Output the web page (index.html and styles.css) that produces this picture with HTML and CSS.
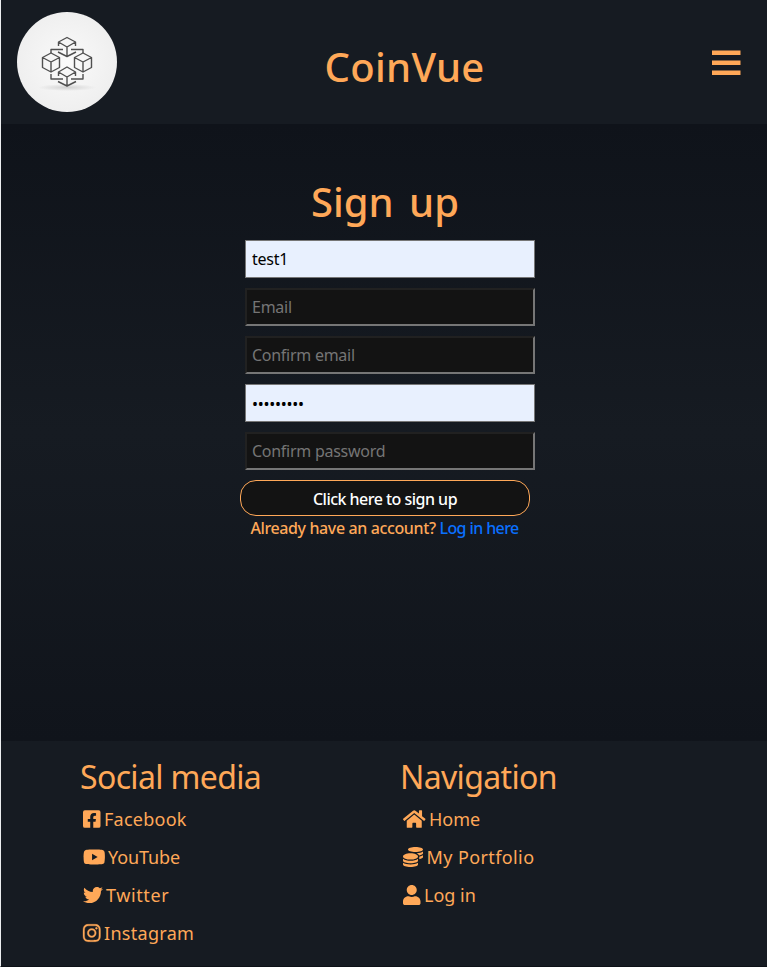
FILE: index.html
```html
<!DOCTYPE html>
<html lang="en">
<head>
<meta charset="utf-8">
<title>CoinVue</title>
<link rel="stylesheet" href="styles.css">
</head>
<body>
<header class="header">
  <svg class="logo" viewBox="0 0 100 100">
    <defs>
      <radialGradient id="disc"><stop offset="0" stop-color="#fafafa"/><stop offset="1" stop-color="#efefef"/></radialGradient>
      <radialGradient id="shade"><stop offset="0" stop-color="#d2d2d2"/><stop offset="1" stop-color="#d2d2d2" stop-opacity="0"/></radialGradient>
    </defs>
    <circle cx="50" cy="50" r="50" fill="url(#disc)"/>
    <ellipse cx="50" cy="75.500" rx="29" ry="3.500" fill="url(#shade)"/>
    <g fill="none" stroke="#505050" stroke-width="1.400" stroke-linejoin="round">
      <path d="M41.500 34v-4l8.500-4.500 8.500 4.500v4M41.500 30l8.500 5 8.500-5M50 35v9.500M41 40l9 4.500 9-4.500"/>
      <path d="M25.500 45.500l8.500-4.500 8.500 4.500v10L34 60l-8.500-4.500zM25.500 45.500l8.500 4.500 8.500-4.500M34 50v10"/>
      <path d="M57.500 45.500l8.500-4.500 8.500 4.500v10L66 60l-8.500-4.500zM57.500 45.500l8.500 4.500 8.500-4.500M66 50v10"/>
      <path d="M41.500 64v-4l8.500-5 8.500 5v4M41.500 60l8.500 5 8.500-5M50 65v9M41 69.500l9 4.500 9-4.500"/>
      <path d="M34 41v-3.500h12M54 37.500h12V41M34 62v5h12M54 67h12v-5"/>
    </g>
  </svg>
  <h1 class="title brand">CoinVue</h1>
  <svg class="bars" viewBox="0 0 29 26"><path d="M0 .5h28.500v4.500H0zM0 10.500h28.500v4.500H0zM0 20.500h28.500v4.500H0z"/></svg>
</header>
<main class="main">
  <h2 class="title signup">Sign up</h2>
  <form class="form">
    <input class="field filled" type="text" value="test1">
    <input class="field" type="text" placeholder="Email">
    <input class="field" type="text" placeholder="Confirm email">
    <input class="field filled dots" type="text" value="•••••••••">
    <input class="field" type="text" placeholder="Confirm password">
    <button class="submit" type="button">Click here to sign up</button>
  </form>
  <p class="hint">Already have an account? <a href="#">Log in here</a></p>
</main>
<footer class="footer">
  <section class="column">
    <h3 class="heading">Social media</h3>
    <ul class="links">
      <li><svg class="icon" viewBox="0 0 448 512"><path d="M400 32H48A48 48 0 0 0 0 80v352a48 48 0 0 0 48 48h137.250V327.690h-63V256h63v-54.640c0-62.150 37-96.480 93.670-96.480 27.140 0 55.520 4.840 55.520 4.840v61h-31.270c-30.810 0-40.420 19.120-40.420 38.730V256h68.780l-11 71.690h-57.780V480H400a48 48 0 0 0 48-48V80a48 48 0 0 0-48-48z"/></svg><span class="facebook">Facebook</span></li>
      <li><svg class="icon wide" viewBox="0 0 576 512"><path d="M549.655 124.083c-6.281-23.650-24.787-42.276-48.284-48.597C458.781 64 288 64 288 64S117.220 64 74.629 75.486c-23.497 6.322-42.003 24.947-48.284 48.597-11.412 42.867-11.412 132.305-11.412 132.305s0 89.438 11.412 132.305c6.281 23.650 24.787 41.500 48.284 47.821C117.220 448 288 448 288 448s170.780 0 213.371-11.486c23.497-6.321 42.003-24.171 48.284-47.821 11.412-42.867 11.412-132.305 11.412-132.305s0-89.438-11.412-132.305zm-317.510 213.508V175.185l142.739 81.205-142.739 81.201z"/></svg><span class="youtube">YouTube</span></li>
      <li><svg class="icon full" viewBox="0 0 512 512"><path d="M459.370 151.716c.325 4.548.325 9.097.325 13.645 0 138.720-105.583 298.558-298.558 298.558-59.452 0-114.680-17.219-161.137-47.106 8.447.974 16.568 1.299 25.340 1.299 49.055 0 94.213-16.568 130.274-44.832-46.132-.975-84.792-31.188-98.112-72.772 6.498.974 12.995 1.624 19.818 1.624 9.421 0 18.843-1.300 27.614-3.573-48.081-9.747-84.143-51.980-84.143-102.985v-1.299c13.969 7.797 30.214 12.670 47.431 13.319-28.264-18.843-46.781-51.005-46.781-87.391 0-19.492 5.197-37.360 14.294-52.954 51.655 63.675 129.300 105.258 216.365 109.807-1.624-7.797-2.599-15.918-2.599-24.040 0-57.828 46.782-104.934 104.934-104.934 30.213 0 57.502 12.670 76.670 33.137 23.715-4.548 46.456-13.320 66.599-25.340-7.798 24.366-24.366 44.833-46.132 57.827 21.117-2.273 41.584-8.122 60.426-16.243-14.292 20.791-32.161 39.308-52.628 54.253z"/></svg><span class="twitter">Twitter</span></li>
      <li><svg class="icon insta" viewBox="0 0 448 512"><path d="M224.100 141c-63.600 0-114.900 51.300-114.900 114.900s51.300 114.900 114.900 114.900S339 319.500 339 255.900 287.700 141 224.100 141zm0 189.600c-41.100 0-74.700-33.500-74.700-74.700s33.500-74.700 74.700-74.700 74.700 33.500 74.700 74.700-33.600 74.700-74.700 74.700zm146.400-194.300c0 14.900-12 26.800-26.800 26.800-14.900 0-26.800-12-26.800-26.800s12-26.800 26.800-26.800 26.800 12 26.800 26.800zm76.100 27.200c-1.700-35.900-9.900-67.700-36.200-93.900-26.200-26.200-58-34.400-93.900-36.200-37-2.100-147.900-2.100-184.900 0-35.800 1.700-67.600 9.900-93.900 36.100s-34.400 58-36.200 93.900c-2.100 37-2.100 147.900 0 184.900 1.700 35.900 9.900 67.700 36.200 93.900s58 34.400 93.900 36.200c37 2.100 147.900 2.100 184.900 0 35.900-1.700 67.700-9.900 93.900-36.200 26.200-26.200 34.400-58 36.200-93.900 2.100-37 2.100-147.800 0-184.800zM398.800 388c-7.800 19.600-22.900 34.700-42.600 42.600-29.500 11.700-99.500 9-132.100 9s-102.700 2.600-132.100-9c-19.600-7.800-34.700-22.900-42.600-42.600-11.700-29.500-9-99.500-9-132.100s-2.600-102.700 9-132.100c7.800-19.600 22.900-34.700 42.600-42.600 29.500-11.700 99.500-9 132.100-9s102.700-2.600 132.100 9c19.600 7.800 34.700 22.900 42.600 42.600 11.700 29.500 9 99.500 9 132.100s2.700 102.700-9 132.100z"/></svg><span class="instagram">Instagram</span></li>
    </ul>
  </section>
  <section class="column">
    <h3 class="heading">Navigation</h3>
    <ul class="links">
      <li><svg class="icon wide" viewBox="0 0 576 512"><path d="M280.370 148.260L96 300.110V464a16 16 0 0 0 16 16l112.060-.29a16 16 0 0 0 15.920-16V368a16 16 0 0 1 16-16h64a16 16 0 0 1 16 16v95.640a16 16 0 0 0 16 16.050L464 480a16 16 0 0 0 16-16V300L295.670 148.260a12.190 12.190 0 0 0-15.300 0zM571.600 251.470L488 182.560V44.050a12 12 0 0 0-12-12h-56a12 12 0 0 0-12 12v72.610L318.470 43a48 48 0 0 0-61 0L4.340 251.470a12 12 0 0 0-1.600 16.900l25.500 31A12 12 0 0 0 45.150 301l235.220-193.740a12.190 12.190 0 0 1 15.300 0L530.900 301a12 12 0 0 0 16.900-1.600l25.500-31a12 12 0 0 0-1.700-16.930z"/></svg><span class="home">Home</span></li>
      <li><svg class="icon full" viewBox="0 0 512 512"><path d="M0 405.300V448c0 35.300 86 64 192 64s192-28.700 192-64v-42.700C342.700 434.400 267.200 448 192 448S41.300 434.400 0 405.300zM320 128c106 0 192-28.700 192-64S426 0 320 0 128 28.700 128 64s86 64 192 64zM0 300.400V352c0 35.300 86 64 192 64s192-28.700 192-64v-51.600c-41.300 34-116.900 51.600-192 51.600S41.300 334.400 0 300.400zm416 11c57.300-11.100 96-31.700 96-55.400v-42.700c-23.200 16.400-57.300 27.600-96 34.500v63.600zM192 160C86 160 0 195.800 0 240s86 80 192 80 192-35.800 192-80-86-80-192-80zm219.300 56.300c60-10.800 100.700-32 100.700-56.300v-42.700c-35.500 25.100-96.500 38.600-160.700 41.800 29.500 14.300 51.200 33.500 60 57.200z"/></svg><span class="portfolio">My Portfolio</span></li>
      <li><svg class="icon" viewBox="0 0 448 512"><path d="M224 256c70.700 0 128-57.300 128-128S294.700 0 224 0 96 57.300 96 128s57.300 128 128 128zm89.600 32h-16.700c-22.200 10.200-46.900 16-72.900 16s-50.600-5.800-72.900-16h-16.700C60.200 288 0 348.200 0 422.400V464c0 26.500 21.500 48 48 48h352c26.500 0 48-21.500 48-48v-41.600c0-74.200-60.200-134.400-134.400-134.400z"/></svg><span>Log in</span></li>
    </ul>
  </section>
</footer>
</body>
</html>
```
FILE: styles.css
```css
* { box-sizing: border-box; }
body {
  margin: 0;
  height: 967px;
  display: flex;
  flex-direction: column;
  border-left: 1px solid #eceef0;
  border-bottom: 1px solid #0d1117;
  background: #161b22;
  color: #ffa858;
  font-family: "Noto Sans", "Open Sans", sans-serif;
  overflow: hidden;
}
.header {
  height: 124px;
  flex: none;
  display: flex;
  align-items: center;
  padding: 0 26px 0 16px;
}
.logo { width: 100px; height: 100px; }
.title { margin: 0; font-size: 40px; line-height: 48px; font-weight: 500; white-space: nowrap; }
.brand { padding-top: 9px; margin-left: 207.5px; letter-spacing: 0.3px; }
.signup { word-spacing: 5px; margin-left: 1px; }
.bars { width: 29px; height: 26px; margin: 2px 0 0 auto; fill: #ffa858; }
.main {
  height: 617px;
  flex: none;
  padding: 54px 0 0 1px;
  display: flex;
  flex-direction: column;
  align-items: center;
  background: linear-gradient(#0f131a, #161b22, #10141b);
}
.form { width: 290px; margin: 14px 0 0 1px; display: flex; flex-direction: column; gap: 10px; }
.field {
  width: 290px;
  height: 38px;
  margin-left: 5px;
  padding: 1px 5px;
  border: 2px solid;
  border-color: #212121 #767676 #767676 #212121;
  background: #131313;
  color: #000;
  font: 16px "Noto Sans", "Open Sans", sans-serif;
  letter-spacing: -0.27px;
}
.field::placeholder { color: #757575; }
.filled { border: 1px solid #767676; background: #e8f0fe; padding: 1px 6px; }
.dots { padding-bottom: 0; }
.submit {
  height: 36px;
  padding: 2px 0 0;
  border: 1px solid #ffa858;
  border-radius: 16px;
  background: #131313;
  color: #fff;
  font: 500 16px "Noto Sans", "Open Sans", sans-serif;
  letter-spacing: -0.52px;
}
.hint { margin: 0; font-size: 16px; line-height: 24px; font-weight: 500; letter-spacing: -0.38px; white-space: nowrap; }
.hint a { color: #0a70ff; text-decoration: none; letter-spacing: -0.6px; }
.footer { flex: 1; display: grid; grid-template-columns: 320px 320px; padding: 16px 0 0 79px; }
.heading { margin: 0; font-size: 32px; line-height: 40px; font-weight: 400; letter-spacing: -0.65px; white-space: nowrap; }
.links { list-style: none; margin: 3px 0 0; padding: 0 0 0 3px; font-size: 18px; font-weight: 430; }
.links li { height: 38px; display: flex; align-items: center; gap: 3.5px; white-space: nowrap; }
.icon { width: 17.5px; height: 20px; fill: #ffa858; flex: none; }
.icon.wide { width: 22.5px; }
.icon.full { width: 20px; }
.icon.insta { stroke: #ffa858; stroke-width: 8px; overflow: visible; }
.facebook { letter-spacing: 0.25px; }
.youtube { letter-spacing: -0.1px; margin-left: -1px; }
.twitter { letter-spacing: 0.6px; margin-left: -0.5px; }
.instagram { letter-spacing: 0.3px; }
.portfolio { letter-spacing: 0.4px; }
```
